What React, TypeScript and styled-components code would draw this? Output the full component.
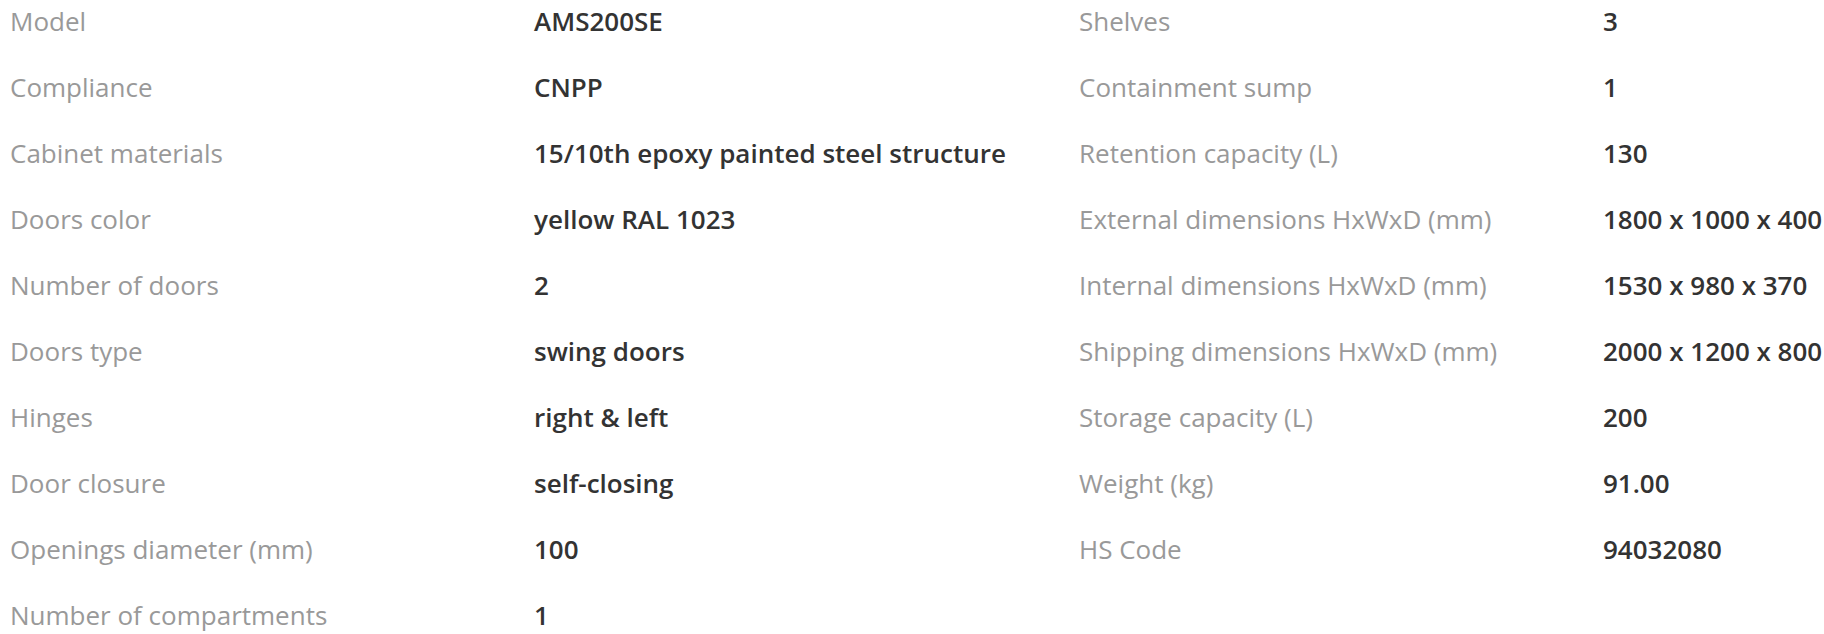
import React from 'react';
import styled, { createGlobalStyle } from 'styled-components';

const leftSpecs = [
  ['Model', 'AMS200SE'],
  ['Compliance', 'CNPP'],
  ['Cabinet materials', '15/10th epoxy painted steel structure'],
  ['Doors color', 'yellow RAL 1023'],
  ['Number of doors', '2'],
  ['Doors type', 'swing doors'],
  ['Hinges', 'right & left'],
  ['Door closure', 'self-closing'],
  ['Openings diameter (mm)', '100'],
  ['Number of compartments', '1'],
];

const rightSpecs = [
  ['Shelves', '3'],
  ['Containment sump', '1'],
  ['Retention capacity (L)', '130'],
  ['External dimensions HxWxD (mm)', '1800 x 1000 x 400'],
  ['Internal dimensions HxWxD (mm)', '1530 x 980 x 370'],
  ['Shipping dimensions HxWxD (mm)', '2000 x 1200 x 800'],
  ['Storage capacity (L)', '200'],
  ['Weight (kg)', '91.00'],
  ['HS Code', '94032080'],
];

const App = () => {
  return (
    <>
      <GlobalStyle />
      <Wrapper>
        <SpecColumn specs={leftSpecs} />
        <SpecColumn specs={rightSpecs} />
      </Wrapper>
    </>
  );
};

const SpecColumn = ({ specs }: { specs: string[][] }) => (
  <Table>
    {specs.map(([label, value]) => (
      <Row key={label}>
        <Label>{label}</Label>
        <Value>{value}</Value>
      </Row>
    ))}
  </Table>
);

export default App;

const GlobalStyle = createGlobalStyle`
  html, body {
    margin: 0;
    padding: 0;
    background: #fff;
    overflow: hidden;
  }
  body {
    font-family: 'Open Sans', 'Noto Sans', sans-serif;
  }
`;

const Wrapper = styled.div`
  display: flex;
  width: 2200px;
  padding-left: 10px;
`;

const Table = styled.div`
  display: flex;
  flex-direction: column;
  width: 1069px;
  flex-shrink: 0;
`;

const Row = styled.div`
  display: grid;
  grid-template-columns: 524px 1fr;
  height: 66px;
  padding-top: 6px;
  box-sizing: border-box;
  font-size: 26px;
  line-height: 30px;
`;

const Label = styled.div`
  color: #999999;
  font-weight: 400;
  white-space: nowrap;
`;

const Value = styled.div`
  color: #333333;
  font-weight: 600;
  white-space: nowrap;
`;
